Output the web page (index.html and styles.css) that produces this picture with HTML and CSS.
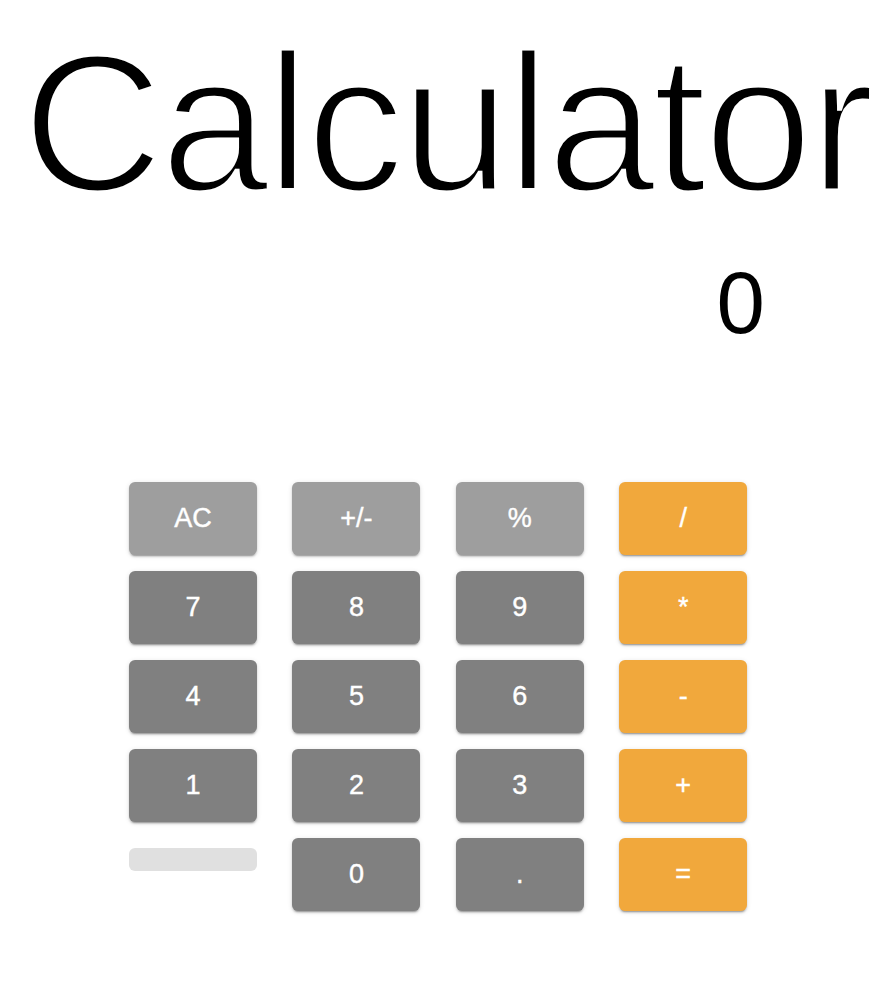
FILE: index.html
```html
<!DOCTYPE html>
<html lang="en">
<head>
<meta charset="utf-8">
<title>Calculator</title>
<link rel="stylesheet" href="styles.css">
</head>
<body>
<div class="app">
  <h1 class="title">Calculator</h1>
  <div class="display">0</div>
  <div class="keys">
    <button class="key fn">AC</button>
    <button class="key fn">+/-</button>
    <button class="key fn">%</button>
    <button class="key op">/</button>
    <button class="key num">7</button>
    <button class="key num">8</button>
    <button class="key num">9</button>
    <button class="key op">*</button>
    <button class="key num">4</button>
    <button class="key num">5</button>
    <button class="key num">6</button>
    <button class="key op">-</button>
    <button class="key num">1</button>
    <button class="key num">2</button>
    <button class="key num">3</button>
    <button class="key op">+</button>
    <button class="key blank"></button>
    <button class="key num">0</button>
    <button class="key num">.</button>
    <button class="key op">=</button>
  </div>
</div>
</body>
</html>
```
FILE: styles.css
```css
html, body {
  margin: 0;
  padding: 0;
  background: #ffffff;
}

body {
  padding: 8px;
  font-family: "Liberation Sans", Arial, sans-serif;
}

.app {
  display: flex;
  flex-direction: column;
}

.title {
  margin: 18px 0 0 14px;
  font-size: 196px;
  font-weight: 400;
  line-height: 1;
  color: #000;
  -webkit-text-stroke: 5px #ffffff;
  letter-spacing: -3.3px;
}

.display {
  margin-top: 37px;
  padding-right: 121px;
  text-align: right;
  font-size: 87px;
  line-height: 1;
  color: #000;
}

.keys {
  margin: 136px 0 0 121px;
  display: grid;
  grid-template-columns: repeat(4, 128px);
  grid-auto-rows: 73px;
  column-gap: 35.4px;
  row-gap: 16px;
}

.key {
  border: none;
  border-radius: 6px;
  padding: 0;
  font-family: "Liberation Sans", Arial, sans-serif;
  font-size: 27px;
  color: #ffffff;
  -webkit-text-stroke: 0.4px #ffffff;
  box-shadow: 0 3px 1px -2px rgba(0,0,0,0.2), 0 2px 2px 0 rgba(0,0,0,0.14), 0 1px 5px 0 rgba(0,0,0,0.12);
  cursor: pointer;
}

.fn {
  background: #9e9e9e;
}

.num {
  background: #808080;
}

.op {
  background: #f1a83c;
}

.blank {
  background: #e0e0e0;
  box-shadow: none;
  align-self: start;
  margin-top: 10px;
  height: 23px;
}
```
